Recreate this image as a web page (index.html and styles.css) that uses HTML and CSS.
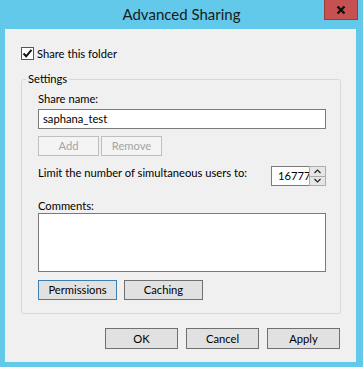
FILE: index.html
```html
<!DOCTYPE html>
<html lang="en">
<head>
    <meta charset="UTF-8">
    <title>Advanced Sharing</title>
    <link rel="stylesheet" href="styles.css">
</head>
<body>
    <div class="window">
        <div class="titlebar">
            <span></span>
            <span class="title">Advanced Sharing</span>
            <span class="close">
                <svg width="10" height="10" viewBox="0 0 10 10"><path d="M1.5 1.5 L8.5 8.5 M8.5 1.5 L1.5 8.5" stroke="#111" stroke-width="2.4"/></svg>
            </span>
        </div>
        <div class="client">
            <label class="check-row">
                <span class="checkbox">
                    <svg width="11" height="11" viewBox="0 0 11 11"><path d="M1.5 5.5 L4.2 8.3 L9.5 1.8" fill="none" stroke="#111" stroke-width="2"/></svg>
                </span>
                Share this folder
            </label>

            <div class="group">
                <div class="legend">Settings</div>
                <div class="label">Share name:</div>
                <div class="textbox">saphana_test</div>
                <div class="btn-row tight">
                    <button class="btn small disabled">Add</button>
                    <button class="btn small disabled">Remove</button>
                </div>
                <div class="limit-row">
                    <span class="limit-text">Limit the number of simultaneous users to:</span>
                    <div class="spin">
                        <span class="spin-value">16777</span>
                        <div class="spin-btns">
                            <span class="arrow"><svg width="7" height="5" viewBox="0 0 7 5"><path d="M0.5 4 L3.5 1 L6.5 4" fill="none" stroke="#222" stroke-width="1.2"/></svg></span>
                            <span class="arrow"><svg width="7" height="5" viewBox="0 0 7 5"><path d="M0.5 1 L3.5 4 L6.5 1" fill="none" stroke="#222" stroke-width="1.2"/></svg></span>
                        </div>
                    </div>
                </div>
                <div class="label comments">Comments:</div>
                <div class="textarea"></div>
                <div class="btn-row">
                    <button class="btn wide default">Permissions</button>
                    <button class="btn wide">Caching</button>
                </div>
            </div>

            <div class="dialog-buttons">
                <button class="btn action">OK</button>
                <button class="btn action">Cancel</button>
                <button class="btn action">Apply</button>
            </div>
        </div>
    </div>
</body>
</html>
```

FILE: styles.css
```css
body { margin: 0; background: #62c9ea; font-family: Lato, "Noto Sans", sans-serif; font-size: 11.2px; color: #000; }
.window { width: 363px; height: 367px; }

.titlebar {
    height: 29px;
    display: grid;
    grid-template-columns: 1fr auto 1fr;
    align-items: start;
}
.title { font-size: 15px; line-height: 20px; margin-top: 4px; color: #1a1a1a; }
.close {
    justify-self: end;
    margin-right: 5px;
    width: 32px;
    height: 19px;
    background: #c75050;
    border: 1px solid #9c3c3a;
    border-top: none;
    display: flex;
    align-items: center;
    justify-content: center;
}

.client {
    margin: 0 7px 0 5px;
    height: 333px;
    background: #f0f0f0;
    padding-top: 18px;
    box-sizing: border-box;
}

.check-row { display: flex; align-items: center; gap: 3px; margin-left: 16px; height: 13px; line-height: 13px; }
.checkbox {
    width: 11px;
    height: 11px;
    border: 1px solid #555;
    background: #fff;
    display: flex;
    align-items: center;
    justify-content: center;
}

.group {
    margin: 19px 0 0 16px;
    width: 320px;
    height: 235px;
    box-sizing: border-box;
    border: 1px solid #d5d9dc;
    border-radius: 3px;
    padding: 0 14px 0 16px;
}
.legend {
    width: fit-content;
    margin: -9px 0 0 -12px;
    padding: 0 2px;
    background: #f0f0f0;
    line-height: 16px;
}
.label { line-height: 16px; margin-top: 4px; }
.textbox {
    margin-top: 2px;
    height: 20px;
    box-sizing: border-box;
    border: 1px solid #7a7a7a;
    background: #fff;
    padding-left: 4px;
    line-height: 18px;
}

.btn-row { display: flex; gap: 7px; margin-top: 8px; }
.btn-row.tight { gap: 2px; margin-top: 7px; }
.btn {
    font-family: inherit;
    font-size: 11.2px;
    color: #000;
    background: #e1e1e1;
    border: 1px solid #707070;
    padding: 0;
    height: 20px;
    line-height: 18px;
}
.btn.small { width: 61px; }
.btn.wide { width: 79px; }
.btn.disabled { background: #f4f4f4; border-color: #bfbfbf; color: #a3a3a3; }
.btn.default { border-color: #3c7fb1; }
.btn.action { width: 73px; height: 21px; }

.limit-row { display: flex; justify-content: space-between; align-items: flex-start; margin-top: 10px; }
.limit-text { line-height: 16px; margin-top: -1px; white-space: nowrap; }
.spin { display: flex; height: 20px; width: 55px; }
.spin-value {
    width: 38px;
    box-sizing: border-box;
    border: 1px solid #7a7a7a;
    border-right: none;
    background: #fff;
    padding-left: 6px;
    line-height: 18px;
    overflow: hidden;
    white-space: nowrap;
}
.spin-btns {
    width: 17px;
    box-sizing: border-box;
    border: 1px solid #adadad;
    background: #e6e6e6;
    display: flex;
    flex-direction: column;
}
.arrow { flex: 1; display: flex; align-items: center; justify-content: center; }
.arrow + .arrow { border-top: 1px solid #adadad; }

.label.comments { margin-top: 12px; line-height: 15px; }
.textarea {
    height: 59px;
    box-sizing: border-box;
    border: 1px solid #7a7a7a;
    background: #fff;
}

.dialog-buttons { display: flex; justify-content: flex-end; gap: 8px; margin: 14px 16px 0 0; }
```
